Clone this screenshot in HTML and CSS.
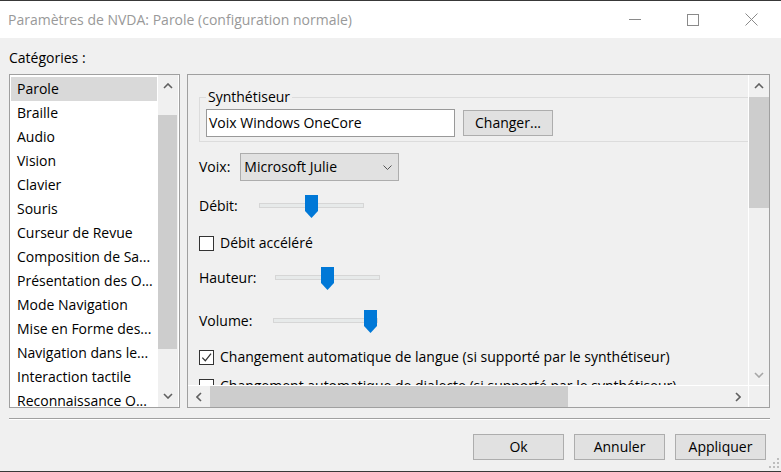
FILE: index.html
```html
<!DOCTYPE html>
<html lang="fr">
<head>
<meta charset="utf-8">
<title>Paramètres de NVDA</title>
<link rel="stylesheet" href="styles.css">
</head>
<body>
<div class="window">
  <header class="titlebar">
    <div class="title">Paramètres de NVDA: Parole (configuration normale)</div>
    <div class="caption">
      <span class="cap-btn"><svg width="12" height="12" viewBox="0 0 12 12"><path d="M0 5.5H12" stroke="#8a8a8a" stroke-width="1"/></svg></span>
      <span class="cap-btn"><svg width="12" height="12" viewBox="0 0 12 12"><rect x="0.5" y="0.5" width="11" height="11" fill="none" stroke="#8a8a8a" stroke-width="1"/></svg></span>
      <span class="cap-btn"><svg width="13" height="13" viewBox="0 0 13 13"><path d="M0.5 0.5L12.5 12.5M12.5 0.5L0.5 12.5" stroke="#8a8a8a" stroke-width="1"/></svg></span>
    </div>
  </header>

  <div class="client">
    <div class="main">
      <div class="left">
        <div class="cat-label">Catégories :</div>
        <div class="listbox">
          <ul class="items">
            <li class="item selected">Parole</li>
            <li class="item">Braille</li>
            <li class="item">Audio</li>
            <li class="item">Vision</li>
            <li class="item">Clavier</li>
            <li class="item">Souris</li>
            <li class="item">Curseur de Revue</li>
            <li class="item">Composition de Sa...</li>
            <li class="item">Présentation des O...</li>
            <li class="item">Mode Navigation</li>
            <li class="item">Mise en Forme des...</li>
            <li class="item">Navigation dans le...</li>
            <li class="item">Interaction tactile</li>
            <li class="item">Reconnaissance O...</li>
          </ul>
          <div class="vscroll list-vs">
            <div class="sb-btn sb-up"><svg width="10" height="6" viewBox="0 0 10 6"><polyline points="1,5 5,1 9,5" fill="none" stroke="#606060" stroke-width="1.6"/></svg></div>
            <div class="sb-track"><div class="thumb list-thumb"></div></div>
            <div class="sb-btn sb-down list-down"><svg width="10" height="6" viewBox="0 0 10 6"><polyline points="1,1 5,5 9,1" fill="none" stroke="#606060" stroke-width="1.6"/></svg></div>
          </div>
        </div>
      </div>

      <div class="right">
        <div class="panel">
          <div class="view">
            <div class="content">
              <fieldset class="group">
                <legend class="group-title">Synthétiseur</legend>
                <div class="synth-row">
                  <div class="textbox">Voix Windows OneCore</div>
                  <button class="btn">Changer...</button>
                </div>
              </fieldset>

              <div class="row voice-row">
                <span class="row-label">Voix:</span>
                <div class="combo">
                  <span>Microsoft Julie</span>
                  <svg width="9" height="5" viewBox="0 0 9 5"><polyline points="0.5,0.5 4.5,4.5 8.5,0.5" fill="none" stroke="#555" stroke-width="1"/></svg>
                </div>
              </div>

              <div class="row slider-row r-debit">
                <span class="row-label lbl-debit">Débit:</span>
                <div class="slider">
                  <div class="track"></div>
                  <svg class="knob" style="left:46px" width="13" height="23" viewBox="0 0 13 23"><polygon points="0,0 13,0 13,16 6.5,23 0,16" fill="#0078d7"/></svg>
                </div>
              </div>

              <label class="row check-row r-accel">
                <span class="checkbox"></span>
                <span>Débit accéléré</span>
              </label>

              <div class="row slider-row r-hauteur">
                <span class="row-label lbl-hauteur">Hauteur:</span>
                <div class="slider">
                  <div class="track"></div>
                  <svg class="knob" style="left:46px" width="13" height="23" viewBox="0 0 13 23"><polygon points="0,0 13,0 13,16 6.5,23 0,16" fill="#0078d7"/></svg>
                </div>
              </div>

              <div class="row slider-row r-volume">
                <span class="row-label lbl-volume">Volume:</span>
                <div class="slider">
                  <div class="track"></div>
                  <svg class="knob" style="left:91px" width="13" height="23" viewBox="0 0 13 23"><polygon points="0,0 13,0 13,16 6.5,23 0,16" fill="#0078d7"/></svg>
                </div>
              </div>

              <label class="row check-row r-lang">
                <span class="checkbox"><svg width="13" height="13" viewBox="0 0 13 13"><polyline points="2.3,6.6 5.3,9.8 11,2.6" fill="none" stroke="#333" stroke-width="1.3"/></svg></span>
                <span>Changement automatique de langue (si supporté par le synthétiseur)</span>
              </label>

              <label class="row check-row r-dial">
                <span class="checkbox"></span>
                <span>Changement automatique de dialecte (si supporté par le synthétiseur)</span>
              </label>
            </div>
          </div>

          <div class="vscroll panel-vs">
            <div class="sb-btn sb-up panel-up"><svg width="10" height="6" viewBox="0 0 10 6"><polyline points="1,5 5,1 9,5" fill="none" stroke="#606060" stroke-width="1.6"/></svg></div>
            <div class="sb-track"><div class="thumb panel-thumb"></div></div>
            <div class="sb-btn sb-down panel-down"><svg width="10" height="6" viewBox="0 0 10 6"><polyline points="1,1 5,5 9,1" fill="none" stroke="#a6a6a6" stroke-width="1.6"/></svg></div>
          </div>

          <div class="hscroll">
            <div class="hb-btn hb-left"><svg width="6" height="10" viewBox="0 0 6 10"><polyline points="5,1 1,5 5,9" fill="none" stroke="#606060" stroke-width="1.6"/></svg></div>
            <div class="hthumb"></div>
            <div class="hspace"></div>
            <div class="hb-btn hb-right"><svg width="6" height="10" viewBox="0 0 6 10"><polyline points="1,1 5,5 1,9" fill="none" stroke="#606060" stroke-width="1.6"/></svg></div>
          </div>

          <div class="corner"></div>
        </div>
      </div>
    </div>

    <div class="separator"></div>

    <div class="buttons">
      <button class="btn dlg-btn">Ok</button>
      <button class="btn dlg-btn">Annuler</button>
      <button class="btn dlg-btn">Appliquer</button>
    </div>
  </div>

  <div class="grip">
    <svg width="11" height="11" viewBox="0 0 11 11">
      <rect x="9" y="0" width="2" height="2" fill="#bdbdbd"/>
      <rect x="5" y="4" width="2" height="2" fill="#bdbdbd"/>
      <rect x="9" y="4" width="2" height="2" fill="#bdbdbd"/>
      <rect x="1" y="8" width="2" height="2" fill="#bdbdbd"/>
      <rect x="5" y="8" width="2" height="2" fill="#bdbdbd"/>
      <rect x="9" y="8" width="2" height="2" fill="#bdbdbd"/>
    </svg>
  </div>
</div>
</body>
</html>
```

FILE: styles.css
```css
* { box-sizing: border-box; }

html, body {
  margin: 0;
  padding: 0;
}

body {
  width: 781px;
  height: 472px;
  overflow: hidden;
  background: #f0f0f0;
  font-family: "Open Sans", "Noto Sans", sans-serif;
  font-size: 14px;
  line-height: 20px;
  color: #000;
}

.window {
  position: relative;
  height: 472px;
  border-top: 1px solid #383838;
  border-bottom: 1px solid #383838;
  display: flex;
  flex-direction: column;
}

/* Title bar */
.titlebar {
  height: 37px;
  flex: none;
  background: #fff;
  display: flex;
  align-items: flex-start;
}

.title {
  flex: 1;
  padding: 9px 0 0 8px;
  color: #999;
  white-space: nowrap;
}

.caption {
  display: flex;
  padding-right: 1px;
}

.cap-btn {
  width: 58px;
  height: 37px;
  display: flex;
  align-items: center;
  justify-content: center;
}

/* Client */
.client {
  flex: 1;
  display: flex;
  flex-direction: column;
}

.main {
  display: flex;
  align-items: flex-start;
  gap: 7px;
  padding-left: 9px;
}

.left {
  width: 171px;
}

.cat-label {
  height: 36px;
  padding-top: 10px;
}

.listbox {
  height: 334px;
  border: 1px solid #a0a0a0;
  background: #fff;
  display: flex;
  overflow: hidden;
}

.items {
  list-style: none;
  margin: 0;
  padding: 2px 0 0 1px;
  width: 148px;
  flex: none;
  overflow: hidden;
}

.item {
  width: 146px;
  height: 24px;
  line-height: 24px;
  padding-left: 6px;
  white-space: nowrap;
  overflow: hidden;
}

.item.selected {
  background: #d9d9d9;
}

/* Scrollbars */
.vscroll {
  display: flex;
  flex-direction: column;
  background: #f0f0f0;
}

.list-vs {
  width: 20px;
  margin-right: 1px;
  flex: none;
}

.sb-btn {
  flex: none;
  display: flex;
  align-items: center;
  justify-content: center;
}

.sb-up { height: 21px; }
.panel-up { height: 22px; }

.sb-down { height: 21px; }
.list-down { padding-bottom: 2px; }

.sb-track {
  flex: 1;
}

.thumb {
  background: #cdcdcd;
}

.list-thumb {
  margin: 19px 1px 0 0;
  height: 234px;
}

.panel-thumb {
  height: 111px;
}

/* Right panel */
.right {
  width: 583px;
  padding-top: 36px;
}

.panel {
  height: 334px;
  border: 1px solid #a0a0a0;
  background: #fff;
  display: grid;
  grid-template-columns: 560px 20px;
  grid-template-rows: 310px 21px;
  gap: 1px;
}

.view {
  background: #f0f0f0;
  overflow: hidden;
}

.hscroll {
  background: #f0f0f0;
  display: flex;
}

.hb-btn {
  display: flex;
  align-items: center;
  justify-content: center;
  flex: none;
}

.hb-left { width: 22px; }
.hb-right { width: 21px; }

.hthumb {
  width: 358px;
  background: #cdcdcd;
}

.hspace { flex: 1; }

.corner { background: #f0f0f0; }

.content {
  width: 820px;
  padding: 12px 0 0 11px;
}

.group {
  margin: 0;
  width: 570px;
  border: 1px solid #dcdcdc;
  padding: 2px 0 4px 6px;
}

.group-title {
  padding: 0 2px;
  line-height: 20px;
}

.synth-row {
  display: flex;
  align-items: center;
  gap: 8px;
}

.textbox {
  width: 249px;
  height: 28px;
  border: 1px solid #999;
  background: #fff;
  padding-left: 2px;
  line-height: 26px;
  white-space: nowrap;
}

.btn {
  width: 90px;
  height: 26px;
  padding: 0;
  border: 1px solid #adadad;
  background: #e1e1e1;
  font-family: inherit;
  font-size: 14px;
  color: #000;
  line-height: 22px;
}

.dlg-btn {
  width: 91px;
}

.row {
  display: flex;
  align-items: center;
  white-space: nowrap;
}

.voice-row {
  margin-top: 11px;
  height: 28px;
  gap: 10px;
}

.combo {
  width: 159px;
  height: 28px;
  border: 1px solid #adadad;
  background: #e1e1e1;
  display: flex;
  align-items: center;
  justify-content: space-between;
  padding: 0 6px 0 3px;
}

.slider-row {
  height: 24px;
}

.r-debit { margin-top: 13px; }
.r-hauteur { margin-top: 13px; }
.r-volume { margin-top: 19px; }

.lbl-debit { width: 60px; }
.lbl-hauteur { width: 76px; }
.lbl-volume { width: 74px; }

.slider {
  position: relative;
  width: 105px;
  height: 24px;
}

.track {
  margin-top: 9px;
  height: 5px;
  border: 1px solid #d6d6d6;
  background: #e7eaea;
}

.knob {
  position: absolute;
  top: 1px;
  display: block;
}

.check-row {
  height: 20px;
  gap: 6px;
}

.r-accel { margin-top: 15px; }
.r-lang { margin-top: 14px; }
.r-dial { margin-top: 9px; }

.checkbox {
  width: 15px;
  height: 15px;
  flex: none;
  border: 1px solid #333;
  background: #fff;
  display: flex;
}

/* Bottom */
.separator {
  margin: 10px 11px 0 9px;
  height: 2px;
  border-top: 1px solid #a0a0a0;
  border-bottom: 1px solid #fff;
}

.buttons {
  display: flex;
  justify-content: flex-end;
  gap: 10px;
  margin-top: 14px;
  padding-right: 15px;
}

.grip {
  position: absolute;
  right: 2px;
  bottom: 2px;
  width: 11px;
  height: 11px;
}

.grip svg { display: block; }
```
